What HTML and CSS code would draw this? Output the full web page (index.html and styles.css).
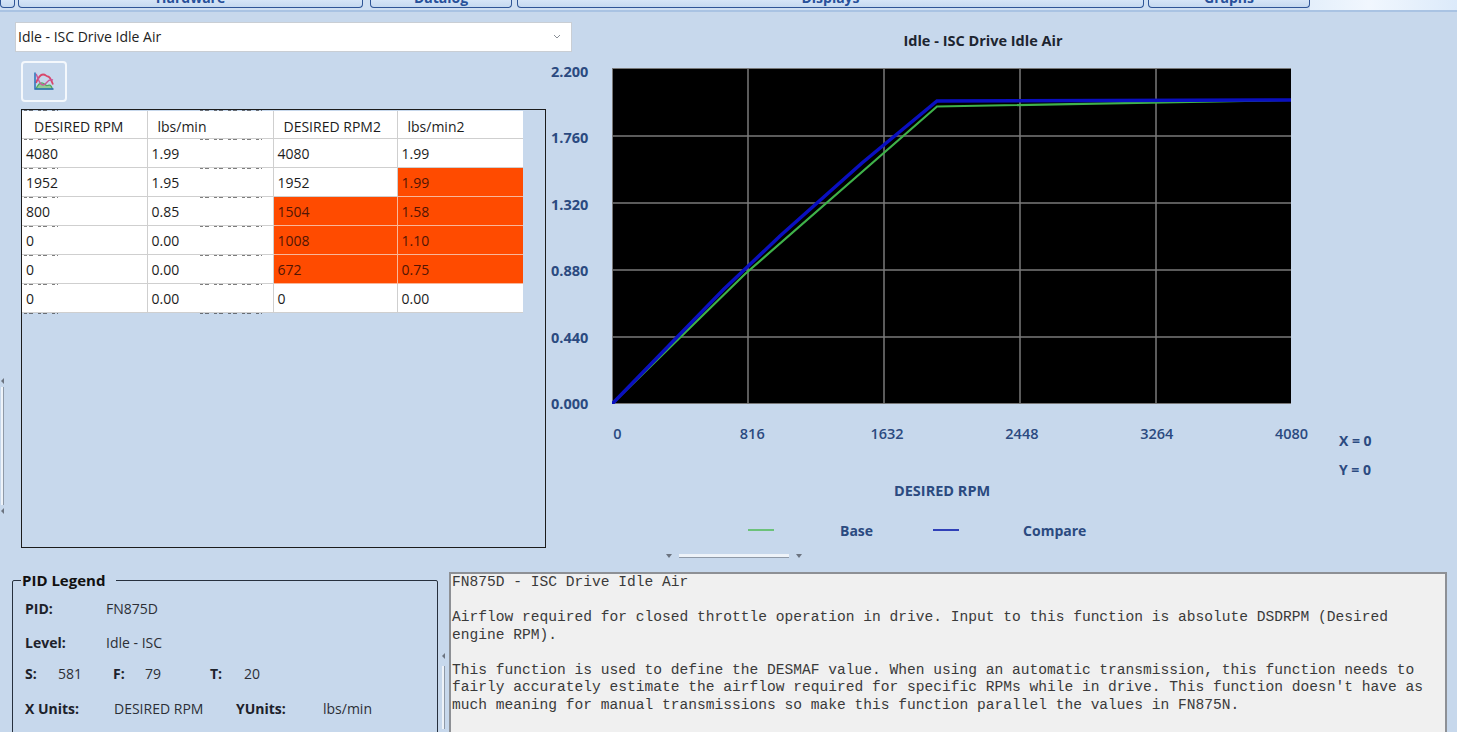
FILE: index.html
```html
<!DOCTYPE html>
<html lang="en">
<head>
<meta charset="utf-8">
<title>Idle - ISC Drive Idle Air</title>
<link rel="stylesheet" href="styles.css">
</head>
<body>
<nav class="tabs">
  <div class="tab tab-stub"></div>
  <div class="tab tab-hardware"><span>Hardware</span></div>
  <div class="tab tab-datalog"><span>Datalog</span></div>
  <div class="tab tab-displays"><span>Displays</span></div>
  <div class="tab tab-graphs"><span>Graphs</span></div>
  <div class="tab-rest"></div>
</nav>
<main class="workspace">
  <section class="top">
    <div class="left">
      <div class="combo"><span>Idle - ISC Drive Idle Air</span>
        <svg class="chev" width="8" height="5" viewBox="0 0 8 5"><path d="M1 1l3 3 3-3" fill="none" stroke="#8a8f96" stroke-width="1"/></svg>
      </div>
      <button class="icon-btn" type="button" aria-label="Graph">
        <svg width="24" height="24" viewBox="0 0 24 24">
          <path d="M4 19c2-4.500 4-6.500 6.500-6s3 3 5 2.500 3-1.500 5 3.500z" fill="#93cc95" stroke="#4fa95e" stroke-width="1.200"/>
          <path d="M4 13c2-5 4-8.500 7-8.500s3 2 5 2 3 3 5 8" fill="none" stroke="#d9476a" stroke-width="1.800"/>
          <path d="M4 4c2 3 3 11 7 11s4-7 10-5" fill="none" stroke="#c85a9c" stroke-width="1.400"/>
          <path d="M3 2.500v16.500H21.500" fill="none" stroke="#2c6fb8" stroke-width="1.500"/>
        </svg>
      </button>
      <div class="table-box">
        <table class="grid">
          <thead><tr><th>DESIRED RPM</th><th>lbs/min</th><th>DESIRED RPM2</th><th>lbs/min2</th></tr></thead>
          <tbody>
            <tr><td>4080</td><td>1.99</td><td>4080</td><td>1.99</td></tr>
            <tr><td>1952</td><td>1.95</td><td>1952</td><td class="diff">1.99</td></tr>
            <tr><td>800</td><td>0.85</td><td class="diff">1504</td><td class="diff">1.58</td></tr>
            <tr><td>0</td><td>0.00</td><td class="diff">1008</td><td class="diff">1.10</td></tr>
            <tr><td>0</td><td>0.00</td><td class="diff">672</td><td class="diff">0.75</td></tr>
            <tr><td>0</td><td>0.00</td><td>0</td><td>0.00</td></tr>
          </tbody>
        </table>
        <div class="ghost ghost-a"></div>
        <div class="ghost ghost-b"></div>
      </div>
    </div>
    <div class="chart">
      <h1 class="chart-title">Idle - ISC Drive Idle Air</h1>
      <div class="chart-body">
        <div class="y-axis"><span>2.200</span><span>1.760</span><span>1.320</span><span>0.880</span><span>0.440</span><span>0.000</span></div>
        <svg class="plot" width="679" height="336" viewBox="0 0 679 336">
          <rect width="679" height="336" fill="#000"/>
          <path d="M136 0V336M272 0V336M408 0V336M544 0V336M0 68H679M0 135H679M0 202H679M0 269H679" stroke="#7a7a7a" stroke-width="1.500" fill="none"/>
          <path d="M0 0.500H679M0.500 0V336M0 335.500H679" stroke="#777" fill="none"/>
          <path d="M0 336L133 206L325 38.500L679 32" fill="none" stroke="#3fb24a" stroke-width="2.200"/>
          <path d="M0 336L112 221L168 168L250 95L325 33L679 32" fill="none" stroke="#0a0fc0" stroke-width="3.500"/>
        </svg>
        <div class="readout"><span>X = 0</span><span>Y = 0</span></div>
        <div class="x-axis"><span>0</span><span>816</span><span>1632</span><span>2448</span><span>3264</span><span>4080</span></div>
        <div class="x-title">DESIRED RPM</div>
        <div class="series">
          <i class="swatch swatch-base"></i><span class="series-base">Base</span>
          <i class="swatch swatch-compare"></i><span class="series-compare">Compare</span>
        </div>
      </div>
    </div>
  </section>
  <section class="bottom">
    <fieldset class="pid">
      <legend>PID Legend</legend>
      <div class="pid-row pid-pid"><b>PID:</b><span>FN875D</span></div>
      <div class="pid-row pid-level"><b>Level:</b><span>Idle - ISC</span></div>
      <div class="pid-row pid-sft"><b>S:</b><span>581</span><b>F:</b><span>79</span><b>T:</b><span>20</span></div>
      <div class="pid-row pid-units"><b>X Units:</b><span>DESIRED RPM</span><b>YUnits:</b><span>lbs/min</span></div>
    </fieldset>
    <pre class="notes">FN875D - ISC Drive Idle Air

Airflow required for closed throttle operation in drive. Input to this function is absolute DSDRPM (Desired
engine RPM).

This function is used to define the DESMAF value. When using an automatic transmission, this function needs to
fairly accurately estimate the airflow required for specific RPMs while in drive. This function doesn't have as
much meaning for manual transmissions so make this function parallel the values in FN875N.</pre>
  </section>
</main>
<div class="split split-left"><i class="arrow-l"></i><i class="bar-v"></i><i class="arrow-l"></i></div>
<div class="split split-mid"><i class="arrow-l"></i><i class="bar-v"></i></div>
<div class="split-h"><i class="arrow-d"></i><i class="bar-h"></i><i class="arrow-d"></i></div>
</body>
</html>
```
FILE: styles.css
```css
* { box-sizing: border-box; }
html, body { margin: 0; height: 732px; overflow: hidden; }
body {
  background: #c7d8ec;
  font-family: "Open Sans", "Noto Sans", sans-serif;
  font-size: 14px;
  color: #222;
  position: relative;
}

/* tab strip */
.tabs {
  display: flex;
  height: 12px;
  border-bottom: 2px solid #a9c3e3;
  background: #cfdff2;
  align-items: flex-start;
}
.tab {
  height: 8px;
  border: 1px solid #2f5596;
  border-top: 0;
  border-radius: 0 0 4px 4px;
  background: linear-gradient(#d6e5f7, #c5d9f0);
  color: #27509a;
  font-weight: 700;
  font-size: 14px;
  text-align: center;
  overflow: hidden;
  flex: none;
}
.tab span { display: block; margin-top: -9px; line-height: 14px; }
.tab-stub { width: 15px; }
.tab-hardware { width: 345px; margin-left: 3px; }
.tab-datalog { width: 142px; margin-left: 7px; }
.tab-displays { width: 627px; margin-left: 5px; }
.tab-graphs { width: 162px; margin-left: 4px; }
.tab-rest { flex: 1; height: 10px; background: linear-gradient(90deg, #e4effb, #f1f7fe 40%, #dceafa); }

.workspace { display: flex; flex-direction: column; }
.top { display: flex; height: 553px; }

/* left pane */
.left { width: 551px; padding-left: 15px; padding-top: 10px; flex: none; }
.combo {
  width: 557px;
  height: 30px;
  display: flex;
  align-items: center;
  justify-content: space-between;
  padding: 0 10px 2px 2px;
  background: #fff;
  border: 1px solid #c9ced4;
  font-size: 14px;
  color: #222;
}
.icon-btn {
  display: flex;
  align-items: center;
  justify-content: center;
  width: 46px;
  height: 41px;
  margin: 9px 0 7px 6px;
  padding: 0;
  background: #c7d8ec;
  border: 2px solid #f4f8fc;
  border-radius: 4px;
}
.table-box {
  position: relative;
  width: 525px;
  height: 439px;
  margin-left: 6px;
  border: 1px solid #1c1c1c;
  padding-top: 1px;
}
.grid { border-collapse: collapse; table-layout: fixed; width: 501px; font-size: 14px; }
.grid th, .grid td {
  padding: 1.500px 0 0 4px;
  background: #fff;
  border: 1px solid #cfcfcf;
  font-weight: 400;
  text-align: left;
  color: #1c1c1c;
  white-space: nowrap;
}
.grid td { height: 29px; }
.grid th { padding: 4px 0 0 10px; height: 27px; border-top: 0; }
.grid th:nth-child(1), .grid td:nth-child(1) { width: 125px; border-left: 0; }
.grid th:nth-child(1) { padding-left: 12px; }
.grid th:nth-child(2), .grid td:nth-child(2) { width: 126px; }
.grid th:nth-child(3), .grid td:nth-child(3) { width: 124px; }
.grid th:nth-child(4), .grid td:nth-child(4) { width: 126px; border-right: 0; }
.grid td.diff { background: #ff4b00; color: #521505; border-color: #f9b79a; }
.ghost {
  position: absolute;
  top: 0;
  height: 204px;
  background: repeating-linear-gradient(to bottom, rgba(40,40,40,.6) 0 1px, transparent 1px 29px);
  -webkit-mask-image: repeating-linear-gradient(to right, #000 0 3px, transparent 3px 5px, #000 5px 9px, transparent 9px 14px);
  mask-image: repeating-linear-gradient(to right, #000 0 3px, transparent 3px 5px, #000 5px 9px, transparent 9px 14px);
  pointer-events: none;
}
.ghost-a { left: 2px; width: 34px; }
.ghost-b { left: 178px; width: 62px; }

/* chart */
.chart { flex: 1; position: relative; padding-top: 19px; }
.chart-title {
  margin: 0 0 17px;
  width: 864px;
  text-align: center;
  font-size: 14.500px;
  font-weight: 700;
  line-height: 20px;
  color: #1d2530;
}
.chart-body {
  display: grid;
  grid-template-columns: 61px 679px 1fr;
  grid-template-rows: 336px 47px 40px auto;
  color: #2b4a80;
  font-weight: 600;
}
.y-axis {
  display: flex;
  flex-direction: column;
  justify-content: space-between;
  height: 352px;
  margin: -6px 0 -10px;
  font-size: 14.500px;
  font-weight: 700;
  line-height: 20px;
}
.plot { display: block; }
.readout {
  grid-row: 1 / span 3;
  grid-column: 3;
  display: flex;
  flex-direction: column;
  gap: 9px;
  padding: 363px 0 0 48px;
  font-size: 14px;
  line-height: 20px;
  font-weight: 700;
}
.x-axis {
  grid-column: 2;
  grid-row: 2;
  display: flex;
  padding-top: 20px;
  margin-left: -62px;
  margin-right: -68px;
  font-size: 14.500px;
  line-height: 20px;
}
.x-axis span { width: 135.800px; text-align: center; }
.x-title {
  grid-column: 2;
  grid-row: 3;
  padding-top: 30px;
  margin-left: 282px;
  font-size: 14.500px;
  font-weight: 700;
  line-height: 20px;
  white-space: nowrap;
}
.series {
  grid-column: 2;
  grid-row: 4;
  display: flex;
  align-items: center;
  margin-left: 136px;
  padding-top: 30px;
  font-size: 14px;
  font-weight: 700;
  line-height: 20px;
}
.swatch { display: block; width: 26px; height: 2px; margin-top: -3px; }
.swatch-base { background: #6cc27a; }
.swatch-compare { background: #3040b8; margin-left: 60px; }
.series-base { margin-left: 66px; }
.series-compare { margin-left: 64px; }

/* bottom */
.bottom { display: flex; align-items: flex-start; padding-left: 12px; height: 200px; }
.pid {
  width: 426px;
  height: 200px;
  margin: 7px 11px 0 0;
  padding: 0;
  border: 1.500px solid #26303e;
  border-radius: 2px;
  color: #2c2f36;
}
.pid legend { margin-left: 8px; padding: 0 11px 0 1px; font-weight: 700; font-size: 15px; color: #111; line-height: 16px; }
.pid b { font-weight: 700; color: #1d222b; }
.pid-row { display: flex; align-items: center; line-height: 20px; margin-left: 12px; }
.pid-pid { margin-top: 11px; }
.pid-pid b, .pid-level b { width: 81px; }
.pid-level { margin-top: 14px; }
.pid-sft { margin-top: 11px; }
.pid-sft b:nth-of-type(1) { width: 33px; }
.pid-sft span:nth-of-type(1) { width: 55px; }
.pid-sft b:nth-of-type(2) { width: 32px; }
.pid-sft span:nth-of-type(2) { width: 65px; }
.pid-sft b:nth-of-type(3) { width: 34px; }
.pid-units { margin-top: 15px; }
.pid-units b:nth-of-type(1) { width: 89px; }
.pid-units span:nth-of-type(1) { width: 122px; }
.pid-units b:nth-of-type(2) { width: 87px; }
.notes {
  width: 998px;
  height: 200px;
  margin: 7px 0 0;
  padding: 0 0 0 1px;
  background: #f0f0f0;
  border: 2px solid #8d9095;
  border-bottom: 0;
  font-family: "Liberation Mono", monospace;
  font-size: 14.580px;
  line-height: 17.500px;
  color: #3a3a3a;
  white-space: pre;
}

/* splitter grips */
.split { position: absolute; display: flex; flex-direction: column; align-items: center; width: 4px; }
.split-left { left: 0; top: 378px; height: 136px; justify-content: space-between; }
.split-mid { left: 441px; top: 653px; height: 79px; gap: 4px; }
.arrow-l { display: block; width: 0; height: 0; border: 3px solid transparent; border-left: 0; border-right: 3px solid #6c7480; }
.bar-v { display: block; width: 3px; flex: 1; margin: 3px 0; background: #eef3f9; border-right: 1px solid #8f9aa8; }
.split-h { position: absolute; left: 666px; top: 554px; width: 136px; display: flex; align-items: center; gap: 7px; }
.arrow-d { display: block; width: 0; height: 0; border: 3.500px solid transparent; border-bottom: 0; border-top: 4px solid #6c7480; }
.bar-h { display: block; flex: 1; height: 4px; background: #eef3f9; border-bottom: 1px solid #8f9aa8; }
```
